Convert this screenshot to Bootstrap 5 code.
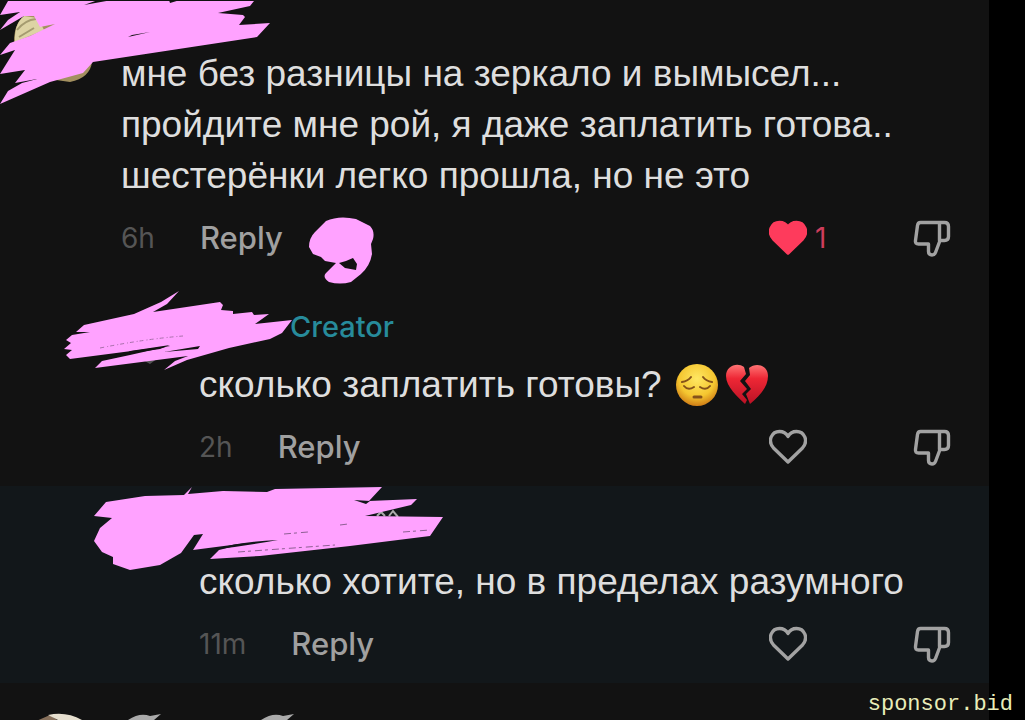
<!DOCTYPE html>
<html lang="ru">
<head>
<meta charset="utf-8">
<meta name="viewport" content="width=device-width, initial-scale=1">
<title>Comments</title>
<link href="https://cdn.jsdelivr.net/npm/bootstrap@5.3.0/dist/css/bootstrap.min.css" rel="stylesheet">
<style>
body{background:#000;font-family:Inter,"Liberation Sans",sans-serif;overflow:hidden}
.screen{position:relative;min-height:100vh;padding-right:36px;overflow:hidden}
.thread{background:#121212;min-height:100vh}
.comment{padding:48px 0 15px 121px}
.reply{padding:0 0 3px 199px}
.reply.fresh{background:#12171a}
.reply-head{height:70px;padding:6px 0 0 91px}
.msg{font:37px/51px "Liberation Sans",Arial,sans-serif;color:#dedede;margin:0;white-space:nowrap}
.actions{height:73px;padding-right:38px;line-height:36px}
.time{font-size:28px;color:#555;margin-right:45px}
.txt-btn{font-size:31px;font-weight:500;color:#a0a0a0;line-height:36px}
.creator{font-size:29px;font-weight:500;color:#278b9b;text-decoration:none}
.like{width:144px;font-size:28px;color:#cf3d5b;line-height:36px}
.ico{display:block;width:38px;height:38px;fill:none;stroke:#a2a2a2;stroke-width:3.4;stroke-linejoin:round;stroke-linecap:round;flex:none}
.ico.liked{fill:#fe3b5c;stroke:#fe3b5c}
.emojis{padding-left:6px}
.emoji{width:42px;height:44px;margin:-6px 0 -6px 8px;vertical-align:-4px}
.paint{position:absolute;left:0;top:0;pointer-events:none;fill:#ffa2ff}
.peek{position:absolute;left:0;bottom:0;display:block}
.site{position:absolute;right:12px;bottom:3px;font:22px/24px "Liberation Mono",monospace;color:#e9edb9;text-decoration:none}
</style>
</head>
<body>
<div class="screen">
<svg width="0" height="0" class="position-absolute" aria-hidden="true">
<symbol id="heart" viewBox="0 0 38 38"><path d="M19 34L4.500 20C-2 12.500 3 3.500 10.500 3.500C14.500 3.500 17 5 19 8.500C21 5 23.500 3.500 27.500 3.500C35 3.500 40 12.500 33.500 20Z"/></symbol>
<symbol id="down" viewBox="0 0 38 38"><path d="M7.500 3.500H31.500Q35.500 3.500 35.500 7.500V17.500Q35.500 21.500 31.500 21.500H27L22.500 33.500Q21.500 36 19 36Q15.500 36 15.500 32.500V25H5.500Q2 25 2.500 21.500L4.500 6.500Q5 3.500 7.500 3.500ZM26.500 4V21.500"/></symbol>
</svg>
<main class="thread">
<article class="comment position-relative">
<p class="msg">мне без разницы на зеркало и вымысел...<br>пройдите мне рой, я даже заплатить готова..<br>шестерёнки легко прошла, но не это</p>
<div class="actions d-flex align-items-center">
<span class="time">6h</span><button class="txt-btn btn p-0 border-0">Reply</button>
<button class="like btn p-0 border-0 ms-auto d-flex align-items-center gap-2" aria-label="Like, 1"><svg class="ico liked"><use href="#heart"/></svg>1</button>
<button class="btn p-0 border-0" aria-label="Dislike"><svg class="ico"><use href="#down"/></svg></button>
</div>
<svg class="paint" width="400" height="290" viewBox="0 0 400 290" aria-hidden="true">
<path fill="#a3905f" d="M14 42Q14 20 28 14L60 18L92 62Q90 78 70 82L56 80Z"/><path fill="#ddd3a4" d="M15 42Q14 24 24 16L38 18L44 30Z"/><path d="M17 30Q25 20 36 19M19 37L34 28" fill="none" stroke="#a59b70" stroke-width="2"/>
<path d="M8 1H254L250 6L218 13L243 15L245 17L239 25L270 23L257 37L93 62L83 73L50 82L0 104L8 91L22 83L37 79L15 83L25 70L0 74L15 50L0 55L10 43L30 36L55 24L40 27L34 16L24 16L0 30L8 20L20 12L0 15Z"/>
<path fill="#121212" d="M84 5L98 0H112ZM169 0H180L170 3ZM128 37L150 32L132 35Z"/>
<path fill-rule="evenodd" d="M309 247Q309 238 315 232L326 221Q339 215 356 219L370 226Q375 231 373 239L371 244L372 254Q370 266 361 274L351 282Q340 285 329 282Q322 277 326 273L336 263L325 261L321 257L313 254ZM339 263L345 268L356 270L357 264L353 258L346 261Z"/>
</svg>
</article>
<article class="reply position-relative">
<div class="reply-head d-flex align-items-center"><a href="#" class="creator">Creator</a></div>
<p class="msg">сколько заплатить готовы?<span class="emojis"><svg class="emoji" viewBox="0 0 42 44" role="img" aria-label="Грустное лицо"><defs><radialGradient id="skin" cx=".5" cy=".35" r=".65"><stop stop-color="#ffe763"/><stop offset=".65" stop-color="#f5c630"/><stop offset="1" stop-color="#cf7d16"/></radialGradient><linearGradient id="red" x2="0" y2="1"><stop stop-color="#ff7474"/><stop offset=".35" stop-color="#ee2735"/><stop offset="1" stop-color="#bb1225"/></linearGradient></defs><circle cx="21" cy="22" r="21" fill="url(#skin)"/><g fill="none" stroke="#85521a" stroke-width="2" stroke-linecap="round"><path d="M6 19Q12 18 15 14M27 14Q30 18 36 19M8 23Q12 28 18 24M24 24Q30 28 34 23"/><path d="M18 34H25" stroke-width="3"/></g></svg><svg class="emoji" viewBox="0 0 42 44" role="img" aria-label="Разбитое сердце"><path fill="url(#red)" d="M18 4C11-1 0 3 0 13C0 24 12 34 19 41L21 37L16 31L21 26L14 18L20 11ZM23 5L24 12L19 18L25 26L20 31L24 41C35 32 42 23 42 13C42 2 30-1 23 5Z"/></svg></span></p>
<div class="actions d-flex align-items-center">
<span class="time">2h</span><button class="txt-btn btn p-0 border-0">Reply</button>
<button class="like btn p-0 border-0 ms-auto" aria-label="Like"><svg class="ico"><use href="#heart"/></svg></button>
<button class="btn p-0 border-0" aria-label="Dislike"><svg class="ico"><use href="#down"/></svg></button>
</div>
<svg class="paint" width="300" height="90" viewBox="0 289 300 90" aria-hidden="true">
<path fill="#555" d="M136 356L150 364L158 358Z"/>
<path d="M84 325L134 314L161 302L179 291L167 304L153 312L220 302L223 305L221 310L233 311L233 314L252 312L254 315L269 314L255 324L292 320L282 333L270 339L229 348L187 360L164 370L175 361L188 356L95 368L102 361L130 355L170 346L70 359L66 355L72 350L64 349L71 343L66 340L72 335L90 332L76 332Z"/>
<path fill="#121212" d="M130 351L170 345L160 349L126 354ZM164 352L200 346L198 349Z"/><path fill="none" stroke="#a870aa" stroke-dasharray="4 3 1 2" d="M100 348Q145 339 183 336"/>
</svg>
</article>
<article class="reply fresh position-relative">
<div class="reply-head"></div>
<p class="msg">сколько хотите, но в пределах разумного</p>
<div class="actions d-flex align-items-center">
<span class="time">11m</span><button class="txt-btn btn p-0 border-0">Reply</button>
<button class="like btn p-0 border-0 ms-auto" aria-label="Like"><svg class="ico"><use href="#heart"/></svg></button>
<button class="btn p-0 border-0" aria-label="Dislike"><svg class="ico"><use href="#down"/></svg></button>
</div>
<svg class="paint" width="450" height="90" viewBox="0 486 450 90" aria-hidden="true">
<path fill="none" stroke="#aaa" stroke-width="2" d="M377 516L381 512L385 516M389 516L393 511L398 517"/>
<path d="M94 516L106 502L145 496L184 495L192 487L188 494L223 491L267 492L275 489L382 487L369 501L417 499L411 505L365 516L443 517L430 536L350 546L260 556L210 559L219 550L247 543L193 550L203 534L194 535L181 553L160 565L130 570L113 564L113 557L102 552L94 541L100 528L112 518Z"/>
<path fill="#12171a" d="M219 549Q235 542 278 540Q245 546 219 549ZM354 500L370 501L366 504Z"/><path fill="none" stroke="#8e6093" d="M238 552L335 545M284 534L308 532M340 525L348 524M403 532L430 530" stroke-dasharray="7 3 3 4"/>
</svg>
</article>
</main>
<svg class="peek" width="420" height="8" viewBox="0 712 420 8" aria-hidden="true"><path fill="#87705b" d="M34 722L50 715L60 722Z"/><path fill="#e6dfcf" d="M48 715Q66 711 82 720H58Z"/><path fill="#aaa" d="M128 720Q140 712 150 716L161 714L154 720ZM261 720Q273 712 283 716L294 714L287 720Z"/></svg>
<a class="site" href="#">sponsor.bid</a>
</div>
<script src="https://cdn.jsdelivr.net/npm/bootstrap@5.3.0/dist/js/bootstrap.bundle.min.js"></script>
</body>
</html>
